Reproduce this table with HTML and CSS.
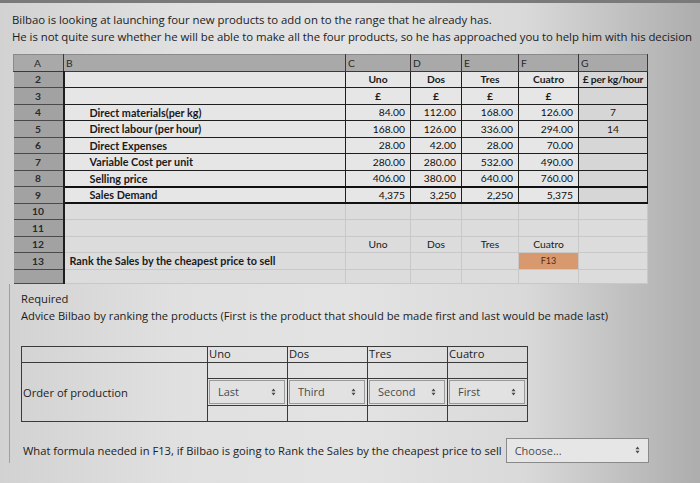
FILE: index.html
```html
<!DOCTYPE html>
<html>
<head>
<meta charset="utf-8">
<link rel="stylesheet" href="styles.css">
</head>
<body>
<div class="page">
  <p class="intro">Bilbao is looking at launching four new products to add on to the range that he already has.</p>
  <p class="intro">He is not quite sure whether he will be able to make all the four products, so he has approached you to help him with his decision</p>

  <table class="sheet">
    <colgroup>
      <col class="c-a"><col class="c-b"><col class="c-c"><col class="c-d"><col class="c-e"><col class="c-f"><col class="c-g">
    </colgroup>
    <tr class="hdr">
      <th class="rn-h">A</th><th>B</th><th>C</th><th>D</th><th>E</th><th>F</th><th>G</th>
    </tr>
    <tr>
      <td class="rn">2</td><td class="d lb"></td><td class="d ctr b">Uno</td><td class="d ctr b">Dos</td><td class="d ctr b">Tres</td><td class="d ctr b">Cuatro</td><td class="d ctr b g unit">£ per kg/hour</td>
    </tr>
    <tr>
      <td class="rn">3</td><td class="d lb"></td><td class="d ctr b">£</td><td class="d ctr b">£</td><td class="d ctr b">£</td><td class="d ctr b">£</td><td class="d g"></td>
    </tr>
    <tr>
      <td class="rn">4</td><td class="d lb lbl">Direct materials(per kg)</td><td class="d num">84.00</td><td class="d num">112.00</td><td class="d num">168.00</td><td class="d num">126.00</td><td class="d ctr g">7</td>
    </tr>
    <tr>
      <td class="rn">5</td><td class="d lb lbl">Direct labour (per hour)</td><td class="d num">168.00</td><td class="d num">126.00</td><td class="d num">336.00</td><td class="d num">294.00</td><td class="d ctr g">14</td>
    </tr>
    <tr>
      <td class="rn">6</td><td class="d lb lbl">Direct Expenses</td><td class="d num">28.00</td><td class="d num">42.00</td><td class="d num">28.00</td><td class="d num">70.00</td><td class="d g"></td>
    </tr>
    <tr>
      <td class="rn">7</td><td class="d lb lbl">Variable Cost per unit</td><td class="d num">280.00</td><td class="d num">280.00</td><td class="d num">532.00</td><td class="d num">490.00</td><td class="d g"></td>
    </tr>
    <tr>
      <td class="rn">8</td><td class="d lb lbl">Selling price</td><td class="d num">406.00</td><td class="d num">380.00</td><td class="d num">640.00</td><td class="d num">760.00</td><td class="d g"></td>
    </tr>
    <tr class="last">
      <td class="rn">9</td><td class="d lb lbl">Sales Demand</td><td class="d num">4,375</td><td class="d num">3,250</td><td class="d num">2,250</td><td class="d num">5,375</td><td class="d g"></td>
    </tr>
    <tr>
      <td class="rn">10</td><td class="e lb"></td><td class="e"></td><td class="e"></td><td class="e"></td><td class="e"></td><td class="e"></td>
    </tr>
    <tr>
      <td class="rn">11</td><td class="e lb"></td><td class="e"></td><td class="e"></td><td class="e"></td><td class="e"></td><td class="e"></td>
    </tr>
    <tr>
      <td class="rn">12</td><td class="e lb"></td><td class="e ctr">Uno</td><td class="e ctr">Dos</td><td class="e ctr">Tres</td><td class="e ctr">Cuatro</td><td class="e"></td>
    </tr>
    <tr>
      <td class="rn">13</td><td class="e lb b rank">Rank the Sales by the cheapest price to sell</td><td class="e"></td><td class="e"></td><td class="e"></td><td class="e ctr f13">F13</td><td class="e"></td>
    </tr>
    <tr class="partial">
      <td class="rn"></td><td class="e lb"></td><td class="e"></td><td class="e"></td><td class="e"></td><td class="e"></td><td class="e"></td>
    </tr>
  </table>

  <div class="question">
    <p class="q-text req">Required</p>
    <p class="q-text">Advice Bilbao by ranking the products (First is the product that should be made first and last would be made last)</p>

    <table class="order">
      <colgroup><col class="o-first"><col class="o-col"><col class="o-col"><col class="o-col"><col class="o-col"></colgroup>
      <tr class="o-head"><td></td><td>Uno</td><td>Dos</td><td>Tres</td><td>Cuatro</td></tr>
      <tr class="o-blank"><td rowspan="3" class="o-label">Order of production</td><td></td><td></td><td></td><td></td></tr>
      <tr class="o-sel">
        <td><div class="select"><span>Last</span><svg class="arr" viewBox="0 0 6 10"><path d="M3 0.5 L5.5 4 H0.5 Z M3 9.5 L5.5 6 H0.5 Z"/></svg></div></td>
        <td><div class="select"><span>Third</span><svg class="arr" viewBox="0 0 6 10"><path d="M3 0.5 L5.5 4 H0.5 Z M3 9.5 L5.5 6 H0.5 Z"/></svg></div></td>
        <td><div class="select"><span>Second</span><svg class="arr" viewBox="0 0 6 10"><path d="M3 0.5 L5.5 4 H0.5 Z M3 9.5 L5.5 6 H0.5 Z"/></svg></div></td>
        <td><div class="select"><span>First</span><svg class="arr" viewBox="0 0 6 10"><path d="M3 0.5 L5.5 4 H0.5 Z M3 9.5 L5.5 6 H0.5 Z"/></svg></div></td>
      </tr>
      <tr class="o-blank"><td></td><td></td><td></td><td></td></tr>
    </table>

    <div class="formula">
      <span class="q-text">What formula needed in F13, if Bilbao is going to Rank the Sales by the cheapest price to sell</span>
      <div class="select wide"><span>Choose...</span><svg class="arr" viewBox="0 0 6 10"><path d="M3 0.5 L5.5 4 H0.5 Z M3 9.5 L5.5 6 H0.5 Z"/></svg></div>
    </div>
  </div>
</div>
</body>
</html>
```
FILE: styles.css
```css
* { box-sizing: border-box; }
html, body { margin: 0; padding: 0; }
body {
  width: 700px;
  height: 483px;
  overflow: hidden;
  background: linear-gradient(90deg, #d2d2d2 0%, #e0e0e0 25%, #e3e3e3 50%, #d9d9d9 75%, #adadad 100%);
  font-family: "Open Sans", "DejaVu Sans", sans-serif;
  color: #1c1c1c;
}
.page {
  border-top: 3px solid #7a7a7a;
  padding: 8px 0 0 12px;
  display: flex;
  flex-direction: column;
  align-items: flex-start;
}
.intro {
  margin: 0;
  font-size: 11.4px;
  line-height: 17px;
  white-space: nowrap;
  letter-spacing: -0.05px;
}

/* spreadsheet */
.sheet {
  margin: 9px 0 0 1px;
  border-collapse: collapse;
  table-layout: fixed;
  width: 634px;
  font-family: Lato, "Liberation Sans", sans-serif;
  font-size: 10.3px;
  color: #1a1a1a;
}
.c-a { width: 50px; }
.c-b { width: 282px; }
.c-c { width: 65px; }
.c-d { width: 51px; }
.c-e { width: 57px; }
.c-f { width: 60px; }
.c-g { width: 69px; }
.sheet tr { height: 16.5px; }
.sheet td, .sheet th { padding: 0 4px; white-space: nowrap; overflow: hidden; }
.sheet th {
  background: #a9a9a9;
  font-weight: normal;
  text-align: left;
  color: #2a2a2a;
  border: 1px solid #3a3a3a;
  border-top: 1px solid #8a8a8a;
  padding-left: 2px;
}
.sheet th.rn-h { text-align: center; border-left: 1px solid #8a8a8a; }
.rn {
  background: #a2a2a2;
  text-align: center;
  color: #2a2a2a;
  font-weight: bold;
  border-bottom: 1.5px solid #4a4a4a;
  border-right: 2px solid #1e1e1e;
}
.d {
  background: #e6e6e6;
  border: 1.5px solid #1e1e1e;
}
.d.g { background: #d6d6d6; }
.last td.d { border-top: 2px solid #111; border-bottom: 2px solid #111; }
.e {
  background: #dcdcdc;
  border: 1px solid #c8c8c8;
}
.e.lb { border-left: 2px solid #1e1e1e; }
.ctr { text-align: center; }
.b { font-weight: bold; }
.unit { padding: 0 1px !important; letter-spacing: -0.2px; }
.num { text-align: right; padding-right: 5px !important; color: #0e0e0e; }
.lbl { font-weight: bold; padding-left: 25px !important; font-size: 10.8px; }
.rank { padding-left: 5px !important; font-size: 10.8px; }
.f13 {
  background: #d9996e;
  color: #5a2a10;
  font-size: 9px;
}
.sheet tr.partial { height: 14px; }

/* question */
.question {
  margin-left: -3px;
  border-left: 1px solid #a0a0a0;
  padding-left: 11px;
  width: 688px;
}
.q-text {
  margin: 0;
  font-size: 11.2px;
  line-height: 17px;
  white-space: nowrap;
}
.req { margin-top: 6px; }

.order {
  margin-top: 22px;
  margin-left: 0;
  border-collapse: collapse;
  table-layout: fixed;
  width: 505px;
  font-size: 11.2px;
  color: #222;
}
.o-first { width: 186px; }
.o-col { width: 80px; }
.order td {
  border: 1px solid #3a3a3a;
  padding: 0 1px;
  vertical-align: top;
  line-height: 14px;
}
.o-head { height: 16px; }
.o-blank { height: 16px; }
.o-sel { height: 26px; }
.order td.o-label { vertical-align: middle; padding-top: 2px; }
.order .o-sel td { vertical-align: middle; padding: 1px 2px 1px 1px; }

.select {
  display: flex;
  align-items: center;
  justify-content: space-between;
  height: 24px;
  border: 1px solid #9a9a9a;
  background: #e2e2e2;
  padding: 0 8px 0 8px;
  color: #4a4a4a;
  font-size: 11px;
}
.arr { width: 5px; height: 8px; fill: #4a4a4a; }

.formula {
  margin-top: 16px;
  display: flex;
  align-items: center;
  gap: 4px;
}
.formula .q-text { padding-left: 2px; font-size: 11.2px; }
.select.wide {
  width: 143px;
  height: 25px;
  border-color: #8a8a8a;
  background: #e6e6e6;
}
```
